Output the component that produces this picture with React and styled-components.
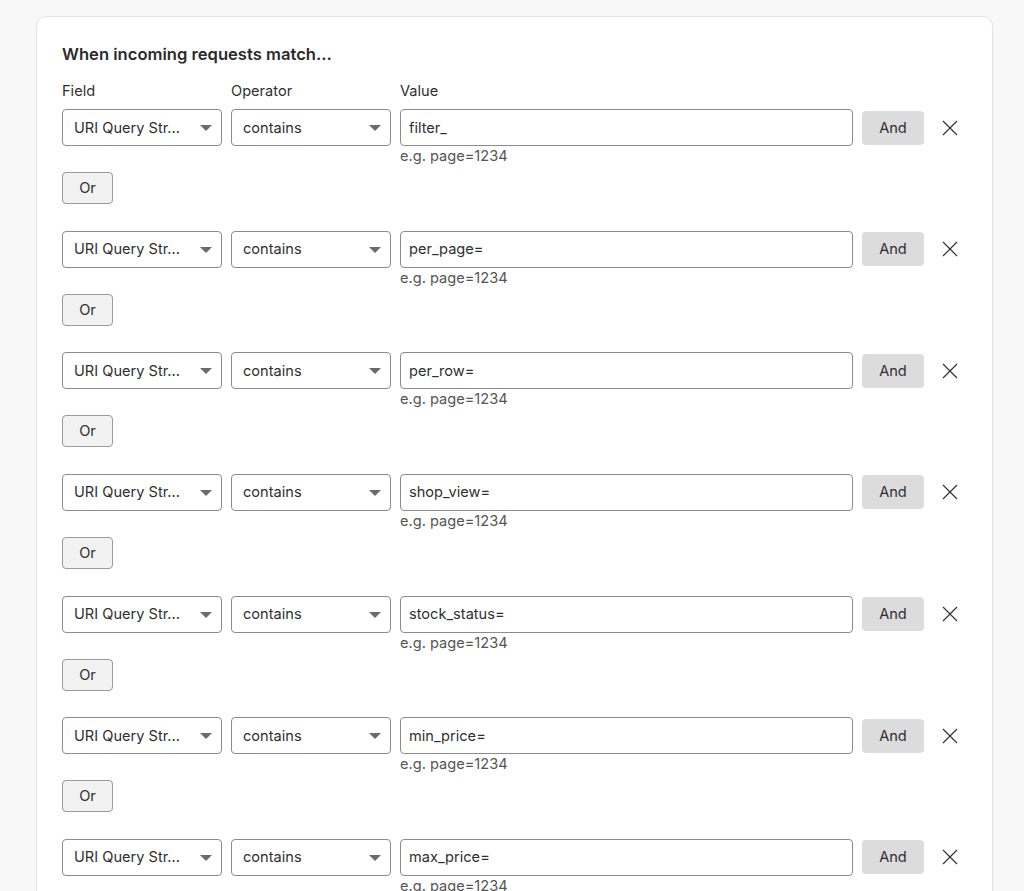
import styled, { createGlobalStyle } from 'styled-components';

const GlobalStyle = createGlobalStyle`
  body {
    margin: 0;
    background: #f8f8f8;
    font-family: 'Inter', 'Noto Sans', sans-serif;
    color: #2f2f2f;
  }
`;

const Page = styled.div`
  padding: 16px 31px 0 36px;
  height: 891px;
  overflow: hidden;
  box-sizing: border-box;
`;

const Card = styled.section`
  background: #fff;
  border: 1px solid #e2e2e2;
  border-radius: 10px;
  padding: 25px 25px 40px;
`;

const Title = styled.h2`
  margin: 0 0 14px;
  font-size: 16.6px;
  line-height: 24px;
  font-weight: 600;
  color: #2b2b2b;
`;

const Grid = styled.div`
  display: grid;
  grid-template-columns: 160px 160px 453px 62px 34px;
  column-gap: 9px;
  align-items: center;
`;

const Label = styled.div`
  font-size: 14.6px;
  line-height: 20px;
  margin: 1px 0 8px;
`;

const Condition = styled.div`
  margin-bottom: 26.67px;
`;

const SelectBox = styled.div`
  position: relative;
  box-sizing: border-box;
  height: 37px;
  border: 1px solid #8c8c8c;
  border-radius: 4px;
  padding: 0 34px 0 11px;
  display: flex;
  align-items: center;
  font-size: 14.6px;
  white-space: nowrap;
  overflow: hidden;

  &::after {
    content: '';
    position: absolute;
    right: 9px;
    top: 15px;
    border-left: 6px solid transparent;
    border-right: 6px solid transparent;
    border-top: 6px solid #6b6b6b;
  }
`;

const ValueCell = styled.div`
  position: relative;
`;

const TextInput = styled.div`
  box-sizing: border-box;
  height: 37px;
  border: 1px solid #8c8c8c;
  border-radius: 4px;
  padding: 0 8px;
  display: flex;
  align-items: center;
  font-size: 14.6px;
`;

const Hint = styled.div`
  position: absolute;
  left: 0;
  top: 37px;
  font-size: 14.6px;
  line-height: 20px;
  color: #555;
  white-space: nowrap;
`;

const Button = styled.button`
  box-sizing: border-box;
  font-family: inherit;
  font-size: 14.6px;
  color: #2f2f2f;
  border-radius: 4px;
  cursor: pointer;
  padding: 0;
  height: ${(p) => (p.$solid ? '34px' : '32px')};
  width: ${(p) => (p.$solid ? '62px' : '51px')};
  background: ${(p) => (p.$solid ? '#dcdcdc' : '#f2f2f2')};
  border: ${(p) => (p.$solid ? 'none' : '1px solid #9a9a9a')};
`;

const OrRow = styled.div`
  margin-top: 26px;
`;

const Remove = styled.button`
  background: none;
  border: none;
  padding: 0;
  justify-self: center;
  display: flex;
  cursor: pointer;
`;

const values = [
  'filter_',
  'per_page=',
  'per_row=',
  'shop_view=',
  'stock_status=',
  'min_price=',
  'max_price=',
];

function CloseIcon() {
  return (
    <svg width="16" height="16" viewBox="0 0 16 16">
      <path d="M1 1 L15 15 M15 1 L1 15" stroke="#333" strokeWidth="1.2" />
    </svg>
  );
}

export default function App() {
  return (
    <>
      <GlobalStyle />
      <Page>
        <Card>
          <Title>When incoming requests match...</Title>
          <Grid>
            <Label>Field</Label>
            <Label>Operator</Label>
            <Label>Value</Label>
          </Grid>
          {values.map((v, i) => (
            <Condition key={v}>
              <Grid>
                <SelectBox>URI Query Str...</SelectBox>
                <SelectBox>contains</SelectBox>
                <ValueCell>
                  <TextInput>{v}</TextInput>
                  <Hint>e.g. page=1234</Hint>
                </ValueCell>
                <Button $solid>And</Button>
                <Remove aria-label="Remove">
                  <CloseIcon />
                </Remove>
              </Grid>
              {i < values.length - 1 && (
                <OrRow>
                  <Button>Or</Button>
                </OrRow>
              )}
            </Condition>
          ))}
        </Card>
      </Page>
    </>
  );
}
